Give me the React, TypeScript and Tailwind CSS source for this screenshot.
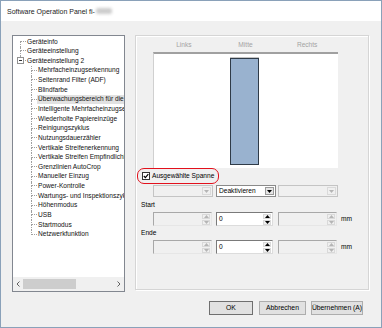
import React from "react";

interface TreeItem {
  label: string;
  level: 0 | 1;
  selected?: boolean;
}

const tree: TreeItem[] = [
  { label: "Geräteinfo", level: 0 },
  { label: "Geräteeinstellung", level: 0 },
  { label: "Geräteeinstellung 2", level: 0 },
  { label: "Mehrfacheinzugserkennung", level: 1 },
  { label: "Seitenrand Filter (ADF)", level: 1 },
  { label: "Blindfarbe", level: 1 },
  { label: "Überwachungsbereich für die Mehrfacheinzugserkennung", level: 1, selected: true },
  { label: "Intelligente Mehrfacheinzugserkennung", level: 1 },
  { label: "Wiederholte Papiereinzüge", level: 1 },
  { label: "Reinigungszyklus", level: 1 },
  { label: "Nutzungsdauerzähler", level: 1 },
  { label: "Vertikale Streifenerkennung", level: 1 },
  { label: "Vertikale Streifen Empfindlichkeit", level: 1 },
  { label: "Grenzlinien AutoCrop", level: 1 },
  { label: "Manueller Einzug", level: 1 },
  { label: "Power-Kontrolle", level: 1 },
  { label: "Wartungs- und Inspektionszyklus", level: 1 },
  { label: "Höhenmodus", level: 1 },
  { label: "USB", level: 1 },
  { label: "Startmodus", level: 1 },
  { label: "Netzwerkfunktion", level: 1 },
];

// dotted tree connector: vertical line on the left, horizontal at mid height
const Conn = ({ up, down }: { up: boolean; down: boolean }) => (
  <div className="w-[6px] h-full flex flex-col shrink-0">
    <div
      className={`h-1/2 border-b border-dotted border-[#a0a0a0] ${
        up ? "border-l" : ""
      }`}
    ></div>
    <div className={`flex-1 border-dotted border-[#a0a0a0] ${down ? "border-l" : ""}`}></div>
  </div>
);

const Tri = ({ dir, color }: { dir: "up" | "down"; color: string }) => (
  <svg width="5" height="3" viewBox="0 0 5 3">
    <path d={dir === "up" ? "M0 3 L2.5 0 L5 3Z" : "M0 0 L2.5 3 L5 0Z"} fill={color} />
  </svg>
);

const Spin = ({ enabled }: { enabled: boolean }) => (
  <div className="w-[8px] h-full flex flex-col gap-[1px] py-[1px] ml-auto mr-[1px]">
    <div className="flex-1 flex items-center justify-center bg-[#f0f0f0] border border-[#d9d9d9]">
      <Tri dir="up" color={enabled ? "#000" : "#b5b5b5"} />
    </div>
    <div className="flex-1 flex items-center justify-center bg-[#f0f0f0] border border-[#d9d9d9]">
      <Tri dir="down" color={enabled ? "#000" : "#b5b5b5"} />
    </div>
  </div>
);

const SpinField = ({ width, value, enabled }: { width: string; value?: string; enabled: boolean }) => (
  <div
    className={`${width} h-[14px] flex items-stretch border ${
      enabled
        ? "bg-white border-t-[#7a7a7a] border-l-[#7a7a7a] border-r-[#dcdcdc] border-b-[#dcdcdc]"
        : "bg-[#f0f0f0] border-t-[#a8a8a8] border-l-[#a8a8a8] border-r-[#e6e6e6] border-b-[#e6e6e6]"
    }`}
  >
    <span className="pl-[2px] flex items-center">{value}</span>
    <Spin enabled={enabled} />
  </div>
);

const Combo = ({ width, value, enabled }: { width: string; value?: string; enabled: boolean }) => (
  <div
    className={`${width} h-[12px] flex items-stretch border ${
      enabled ? "bg-white border-[#8a8a8a]" : "bg-[#f0f0f0] border-[#c4c4c4]"
    }`}
  >
    <span className="pl-[2px] flex items-center">{value}</span>
    <div
      className={`ml-auto w-[9px] my-[1px] mr-[1px] flex items-center justify-center border ${
        enabled ? "bg-[#e6e6e6] border-[#9a9a9a]" : "bg-[#f0f0f0] border-[#dadada]"
      }`}
    >
      <Tri dir="down" color={enabled ? "#000" : "#b5b5b5"} />
    </div>
  </div>
);

const Chevron = ({ dir }: { dir: "left" | "right" }) => (
  <svg width="4" height="6" viewBox="0 0 4 6">
    <path
      d={dir === "left" ? "M3.5 0.5 L1 3 L3.5 5.5" : "M0.5 0.5 L3 3 L0.5 5.5"}
      fill="none"
      stroke="#606060"
      strokeWidth="1"
    />
  </svg>
);

export default function App() {
  const lastChild = tree.length - 1;

  return (
    <div className="w-[382px] h-[328px] flex flex-col border border-[#8aa1b9] bg-[#f0f0f0] text-black text-[6.6px] leading-none overflow-hidden font-['Liberation_Sans',Arial,sans-serif]">
      {/* Title bar */}
      <div className="h-[20px] shrink-0 bg-white flex items-center pl-[6px] text-[7px] text-[#1b1b1b]">
        Software Operation Panel fi-
        <span className="inline-block ml-[1px] w-[16px] h-[6px] rounded-[2px] bg-[#cdcdcd] blur-[1.5px]"></span>
      </div>

      <div className="flex pt-[14px] pl-[11px]">
        {/* Tree view */}
        <div className="w-[113px] h-[257px] border border-[#828790] bg-white flex flex-col">
          <div className="flex-1 overflow-hidden pt-[1px] whitespace-nowrap text-[#111]">
            {tree.map((item, i) =>
              item.level === 0 ? (
                <div key={item.label} className="h-[9.65px] flex items-stretch pl-[7px]">
                  <div className="relative">
                    <Conn up={i > 0} down={i < 2} />
                    {i === 2 && (
                      <div className="absolute left-[-3px] top-[1px] w-[7px] h-[7px] border border-[#919191] bg-white flex items-center justify-center">
                        <div className="w-[3px] h-px bg-[#333]"></div>
                      </div>
                    )}
                  </div>
                  <span className="ml-[1px] flex items-center">{item.label}</span>
                </div>
              ) : (
                <div key={item.label} className="h-[9.65px] flex items-stretch pl-[18px]">
                  <Conn up={true} down={i < lastChild} />
                  <span
                    className={`flex items-center pl-[1px] pr-[2px] ${
                      item.selected ? "bg-[#e2e2e2]" : ""
                    }`}
                  >
                    {item.label}
                  </span>
                </div>
              )
            )}
          </div>
          {/* Horizontal scrollbar */}
          <div className="h-[14px] bg-[#f0f0f0] flex items-center">
            <div className="w-[10px] flex justify-center">
              <Chevron dir="left" />
            </div>
            <div className="w-[53px] h-[10px] bg-[#cdcdcd]"></div>
            <div className="ml-auto w-[10px] flex justify-center">
              <Chevron dir="right" />
            </div>
          </div>
        </div>

        {/* Group box */}
        <div className="ml-[10px] w-[234px] h-[255px] border border-[#d5d5d5] shadow-[inset_1px_1px_0_#ffffff,1px_1px_0_#ffffff] flex flex-col">
          <div className="ml-[17px] mt-[5px] w-[185px] grid grid-cols-3 h-[9px] items-center text-center text-[#a3a3a3]">
            <span>Links</span>
            <span>Mitte</span>
            <span>Rechts</span>
          </div>

          <div className="ml-[17px] mt-[2px] w-[185px] h-[116px] bg-white border-t-2 border-l border-t-[#a0a0a0] border-l-[#d0d0d0]">
            <div className="ml-[76px] mt-[3px] w-[29px] border-t border-[#c4c4c4]">
              <div className="h-[107px] bg-[#99b2cf] border border-[#2f3b48]"></div>
            </div>
          </div>

          {/* Highlighted checkbox */}
          <div className="ml-[1px] w-[82px] h-[16px] rounded-[7px] border-[1.5px] border-[#e2101c] flex items-center pl-[4px] whitespace-nowrap">
            <div className="w-[8px] h-[8px] border border-[#333] bg-white flex items-center justify-center">
              <svg width="6" height="6" viewBox="0 0 6 6">
                <path d="M0.8 3 L2.4 4.6 L5.3 1.2" fill="none" stroke="#000" strokeWidth="1.2" />
              </svg>
            </div>
            <span className="ml-[2px]">Ausgewählte Spanne</span>
          </div>

          <div className="ml-[17px] mt-[1px] flex">
            <Combo width="w-[60px]" enabled={false} />
            <div className="ml-[3px]">
              <Combo width="w-[60px]" value="Deaktivieren" enabled={true} />
            </div>
            <div className="ml-[2px]">
              <Combo width="w-[60px]" enabled={false} />
            </div>
          </div>

          <div className="ml-[5px] mt-[4px] h-[9px] flex items-center">Start</div>
          <div className="ml-[17px] mt-[2px] flex items-center">
            <SpinField width="w-[59px]" enabled={false} />
            <div className="ml-[4px]">
              <SpinField width="w-[57px]" value="0" enabled={true} />
            </div>
            <div className="ml-[5px]">
              <SpinField width="w-[59px]" enabled={false} />
            </div>
            <span className="ml-[4px]">mm</span>
          </div>

          <div className="ml-[5px] mt-[3px] h-[9px] flex items-center">Ende</div>
          <div className="ml-[17px] mt-[2px] flex items-center">
            <SpinField width="w-[59px]" enabled={false} />
            <div className="ml-[4px]">
              <SpinField width="w-[57px]" value="0" enabled={true} />
            </div>
            <div className="ml-[5px]">
              <SpinField width="w-[59px]" enabled={false} />
            </div>
            <span className="ml-[4px]">mm</span>
          </div>
        </div>
      </div>

      {/* Dialog buttons */}
      <div className="mt-[9px] flex justify-end pr-[18px] text-[6.8px] whitespace-nowrap">
        <button className="w-[44px] h-[14px] border border-[#6f6f6f] bg-[#e1e1e1] flex items-center justify-center">
          OK
        </button>
        <button className="ml-[6px] w-[47px] h-[14px] border border-[#adadad] bg-[#e1e1e1] flex items-center justify-center">
          Abbrechen
        </button>
        <button className="ml-[5px] w-[52px] h-[14px] border border-[#adadad] bg-[#e1e1e1] flex items-center justify-center">
          Übernehmen (A)
        </button>
      </div>
    </div>
  );
}
